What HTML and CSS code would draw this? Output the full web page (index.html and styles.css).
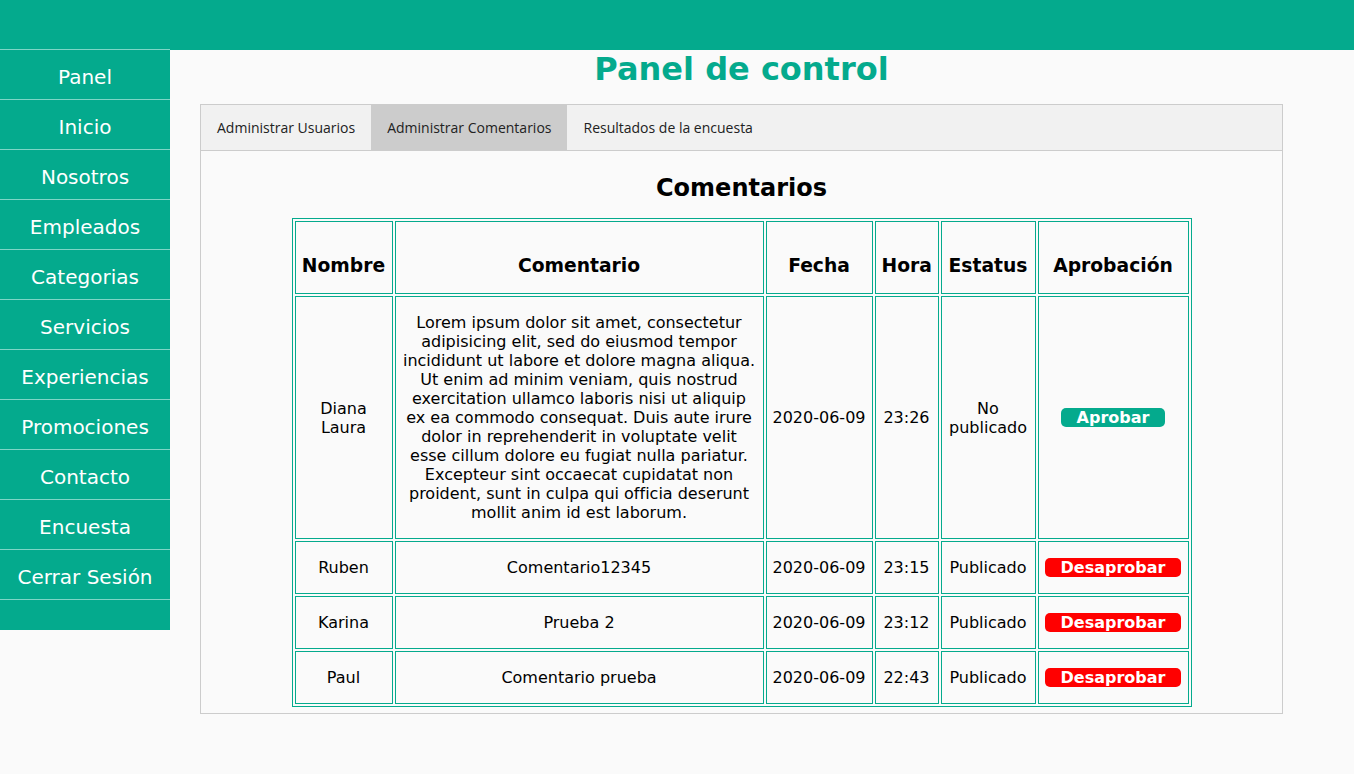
FILE: index.html
```html
<!DOCTYPE html>
<html lang="es">
<head>
<meta charset="utf-8">
<title>Panel de control</title>
<link rel="stylesheet" href="styles.css">
</head>
<body>
<header class="topbar"></header>
<div class="layout">
  <nav class="sidebar">
    <a href="#">Panel</a>
    <a href="#">Inicio</a>
    <a href="#">Nosotros</a>
    <a href="#">Empleados</a>
    <a href="#">Categorias</a>
    <a href="#">Servicios</a>
    <a href="#">Experiencias</a>
    <a href="#">Promociones</a>
    <a href="#">Contacto</a>
    <a href="#">Encuesta</a>
    <a href="#">Cerrar Sesión</a>
  </nav>
  <main class="main">
    <h1 class="title">Panel de control</h1>
    <div class="card">
      <div class="tabs">
        <button class="tab">Administrar Usuarios</button>
        <button class="tab active">Administrar Comentarios</button>
        <button class="tab">Resultados de la encuesta</button>
      </div>
      <div class="tabcontent">
        <h2 class="subtitle">Comentarios</h2>
        <table class="comments">
          <thead>
            <tr>
              <th class="c-name">Nombre</th>
              <th class="c-text">Comentario</th>
              <th class="c-date">Fecha</th>
              <th class="c-time">Hora</th>
              <th class="c-status">Estatus</th>
              <th class="c-action">Aprobación</th>
            </tr>
          </thead>
          <tbody>
            <tr>
              <td>Diana Laura</td>
              <td>Lorem ipsum dolor sit amet, consectetur adipisicing elit, sed do eiusmod tempor incididunt ut labore et dolore magna aliqua. Ut enim ad minim veniam, quis nostrud exercitation ullamco laboris nisi ut aliquip ex ea commodo consequat. Duis aute irure dolor in reprehenderit in voluptate velit esse cillum dolore eu fugiat nulla pariatur. Excepteur sint occaecat cupidatat non proident, sunt in culpa qui officia deserunt mollit anim id est laborum.</td>
              <td class="nowrap">2020-06-09</td>
              <td class="nowrap">23:26</td>
              <td>No publicado</td>
              <td><button class="btn approve">Aprobar</button></td>
            </tr>
            <tr>
              <td>Ruben</td>
              <td>Comentario12345</td>
              <td class="nowrap">2020-06-09</td>
              <td class="nowrap">23:15</td>
              <td>Publicado</td>
              <td><button class="btn reject">Desaprobar</button></td>
            </tr>
            <tr>
              <td>Karina</td>
              <td>Prueba 2</td>
              <td class="nowrap">2020-06-09</td>
              <td class="nowrap">23:12</td>
              <td>Publicado</td>
              <td><button class="btn reject">Desaprobar</button></td>
            </tr>
            <tr>
              <td>Paul</td>
              <td>Comentario prueba</td>
              <td class="nowrap">2020-06-09</td>
              <td class="nowrap">22:43</td>
              <td>Publicado</td>
              <td><button class="btn reject">Desaprobar</button></td>
            </tr>
          </tbody>
        </table>
      </div>
    </div>
  </main>
</div>
</body>
</html>
```

FILE: styles.css
```css
* { box-sizing: border-box; }

html, body {
  margin: 0;
  padding: 0;
  background: #fafafa;
  font-family: "DejaVu Sans", Verdana, sans-serif;
  color: #000;
}

.topbar {
  height: 50px;
  background: #04aa8d;
}

.layout {
  display: flex;
  align-items: flex-start;
}

.sidebar {
  width: 170px;
  flex: 0 0 170px;
  margin-top: -1px;
  background: #04aa8d;
  border-top: 1px solid #7fd5c6;
  padding-bottom: 30px;
  display: flex;
  flex-direction: column;
}

.sidebar a {
  display: block;
  height: 50px;
  padding-top: 5px;
  line-height: 44px;
  border-bottom: 1px solid #7fd5c6;
  color: #fff;
  text-decoration: none;
  text-align: center;
  font-size: 20px;
}

.main {
  flex: 1;
  padding-left: 30px;
}

.title {
  width: 1083px;
  margin: 0 0 17px;
  padding-top: 1px;
  text-align: center;
  color: #04aa8d;
  font-size: 32px;
  line-height: 36px;
  font-weight: bold;
}

.card {
  width: 1083px;
  border: 1px solid #ccc;
}

.tabs {
  display: flex;
  background: #f1f1f1;
  border-bottom: 1px solid #ccc;
}

.tab {
  border: none;
  background: transparent;
  padding: 14px 16px;
  font-family: "Open Sans", sans-serif;
  font-size: 14px;
  line-height: 17px;
  color: #222;
  cursor: pointer;
}

.tab.active {
  background: #ccc;
}

.tabcontent {
  padding: 6px 12px;
}

.subtitle {
  margin: 17px 0 16px;
  text-align: center;
  font-size: 24px;
  line-height: 28px;
  font-weight: bold;
}

.comments {
  width: 900px;
  margin: 0 auto;
  table-layout: fixed;
  border: 1px solid #04aa8d;
  border-spacing: 2px;
}

.comments th,
.comments td {
  border: 1px solid #04aa8d;
  text-align: center;
  vertical-align: middle;
}

.comments th {
  padding: 33px 6px 16px;
  font-size: 18.72px;
  line-height: 22px;
  font-weight: bold;
}

.comments td {
  padding: 16px 6px;
  font-size: 16px;
  line-height: 19px;
}

.comments td.nowrap { white-space: nowrap; }

.c-name { width: 98px; }
.c-text { width: 369px; }
.c-date { width: 107px; }
.c-time { width: 64px; }
.c-status { width: 95px; }
.c-action { width: 151px; }

.btn {
  display: block;
  margin: 0 auto;
  border: none;
  border-radius: 5px;
  padding: 0 16px;
  height: 19px;
  font-family: "DejaVu Sans", Verdana, sans-serif;
  font-size: 16px;
  line-height: 19px;
  font-weight: bold;
  color: #fff;
  cursor: pointer;
}

.btn.approve { background: #04aa8d; }
.btn.reject { background: #ff0000; }
```
